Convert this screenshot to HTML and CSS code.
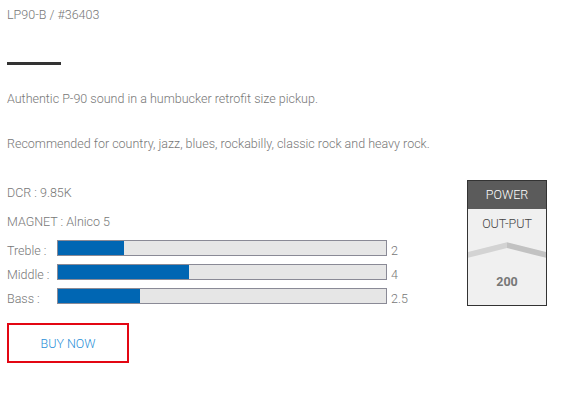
FILE: index.html
```html
<!DOCTYPE html>
<html>
<head>
<meta charset="utf-8">
<link rel="stylesheet" href="styles.css">
</head>
<body>
<div class="page">
  <div class="code">LP90-B / #36403</div>
  <div class="rule"></div>
  <p class="desc">Authentic P-90 sound in a humbucker retrofit size pickup.</p>
  <p class="desc desc2">Recommended for country, jazz, blues, rockabilly, classic rock and heavy rock.</p>
  <div class="specs-row">
    <div class="specs">
      <div class="spec">DCR : 9.85K</div>
      <div class="spec spec2">MAGNET : Alnico 5</div>
      <div class="bars">
        <div class="bar-row"><span class="bar-label">Treble :</span><span class="bar"><span class="fill" style="width:20%"></span></span><span class="bar-val">2</span></div>
        <div class="bar-row"><span class="bar-label">Middle :</span><span class="bar"><span class="fill" style="width:40%"></span></span><span class="bar-val">4</span></div>
        <div class="bar-row"><span class="bar-label">Bass :</span><span class="bar"><span class="fill" style="width:25%"></span></span><span class="bar-val">2.5</span></div>
      </div>
    </div>
    <div class="power">
      <div class="power-head">POWER</div>
      <div class="power-body">
        <div class="power-sub">OUT-PUT</div>
        <svg class="chev" width="80" height="20" viewBox="0 0 80 20">
          <polygon points="0,10 40,0 40,6 0,16" fill="#d3d3d3"/>
          <polygon points="40,0 80,10 80,16 40,6" fill="#c2c2c2"/>
        </svg>
        <div class="power-val">200</div>
      </div>
    </div>
  </div>
  <a class="buy" href="#">BUY NOW</a>
</div>
</body>
</html>
```
FILE: styles.css
```css
html, body {
  margin: 0;
  padding: 0;
  background: #fff;
}
body {
  font-family: Roboto, "Liberation Sans", sans-serif;
  font-weight: 300;
  font-size: 12.5px;
  color: #777;
}
.page {
  padding: 7px 7px 0 7px;
}
.code {
  line-height: 16px;
}
.rule {
  width: 54px;
  height: 3px;
  background: #333;
  margin-top: 39px;
}
.desc {
  margin: 26px 0 0 0;
  line-height: 16px;
}
.desc2 {
  margin-top: 29px;
}
.specs-row {
  display: flex;
  margin-top: 28px;
}
.specs {
  width: 460px;
  padding-top: 5px;
}
.spec {
  line-height: 16px;
}
.spec2 {
  margin-top: 13px;
}
.bars {
  margin-top: 10px;
  display: flex;
  flex-direction: column;
  gap: 8px;
}
.bar-row {
  display: flex;
  align-items: flex-end;
  height: 16px;
}
.bar-label {
  width: 50px;
  line-height: 16px;
  position: relative;
  top: 3px;
}
.bar {
  width: 328px;
  height: 14px;
  border: 1px solid #8a8a96;
  background: #e6e6e6;
  display: flex;
}
.fill {
  height: 100%;
  background: #0066b3;
}
.bar-val {
  margin-left: 4px;
  line-height: 16px;
  position: relative;
  top: 3px;
}
.power {
  width: 78px;
  height: 124px;
  border: 1px solid #333;
  background: #f0f0f0;
  display: flex;
  flex-direction: column;
}
.power-head {
  height: 28px;
  background: #5b5b5b;
  color: #fff;
  text-align: center;
  line-height: 28px;
}
.power-body {
  display: flex;
  flex-direction: column;
  align-items: center;
}
.power-sub {
  color: #444;
  line-height: 16px;
  margin-top: 7px;
}
.chev {
  display: block;
  width: 78px;
  height: 20px;
  margin-top: 10px;
}
.power-val {
  font-weight: 700;
  color: #777;
  margin-top: 12px;
  line-height: 16px;
}
.buy {
  display: flex;
  align-items: center;
  justify-content: center;
  width: 118px;
  height: 36px;
  border: 2px solid #e30613;
  color: #2b8fd8;
  text-decoration: none;
  margin-top: 17px;
}
```
